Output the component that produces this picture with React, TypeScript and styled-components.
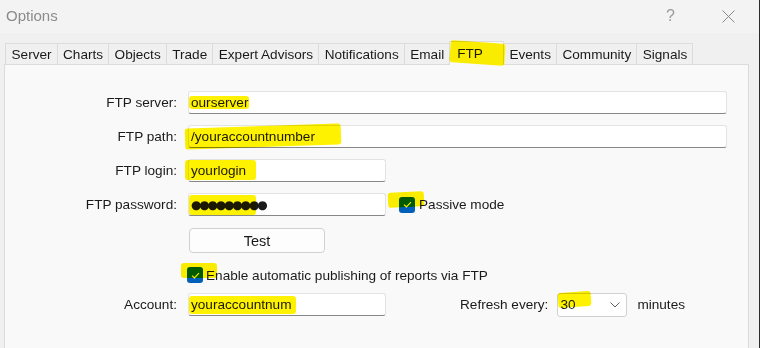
import React from 'react';
import styled, { createGlobalStyle } from 'styled-components';

const GlobalStyle = createGlobalStyle`
  html, body { margin: 0; padding: 0; background: #f0f0f0; }
  body { font-family: "Liberation Sans", Arial, sans-serif; }
`;

const MARKER = '#fff200';

const Window = styled.div`
  width: 760px;
  height: 348px;
  box-sizing: border-box;
  display: flex;
  flex-direction: column;
  overflow: hidden;
  background: #f0f0f0;
  border-right: 1px solid #2b2b2b;
  color: #1a1a1a;
  font-size: 13.6px;
`;

const TitleBar = styled.div`
  height: 33px;
  flex: none;
  display: flex;
  align-items: center;
  padding: 0 24px 0 6px;
  background: #f3f3f3;
`;

const Title = styled.div`
  flex: 1;
  font-size: 15px;
  color: #8b8b8b;
  margin-top: -2px;
`;

const Help = styled.div`
  font-size: 16px;
  color: #9a9a9a;
  margin-right: 47px;
  margin-top: -2px;
`;

const Body = styled.div`
  flex: 1;
  display: flex;
  flex-direction: column;
  padding: 8px 10px 0 4px;
`;

const TabStrip = styled.div`
  height: 24px;
  display: flex;
  align-items: flex-end;
  padding-left: 1px;
  margin-bottom: -1px;
  position: relative;
  z-index: 1;
`;

const Tab = styled.div<{ $active?: boolean }>`
  box-sizing: border-box;
  height: ${(p) => (p.$active ? 24 : 22)}px;
  display: flex;
  align-items: center;
  padding: ${(p) => (p.$active ? '0 20px 1px 7px' : '0 5px 0 5.5px')};
  margin-left: -1px;
  border: 1px solid #dcdcdc;
  border-bottom: ${(p) => (p.$active ? 'none' : '1px solid #dcdcdc')};
  background: ${(p) => (p.$active ? '#f9f9f9' : '#f0f0f0')};
  position: relative;
  z-index: ${(p) => (p.$active ? 2 : 1)};
  white-space: nowrap;
  &:first-child { margin-left: 0; }
`;

const Panel = styled.div`
  flex: 1;
  background: #f9f9f9;
  border: 1px solid #dcdcdc;
  border-bottom: none;
  padding: 26px 21px 0 0;
  display: flex;
  flex-direction: column;
`;

const Row = styled.div<{ $mt?: number; $h?: number }>`
  display: flex;
  align-items: center;
  height: ${(p) => p.$h ?? 23}px;
  margin-top: ${(p) => p.$mt ?? 0}px;
`;

const Label = styled.div`
  width: 172px;
  margin-right: 11px;
  text-align: right;
  white-space: nowrap;
`;

const Field = styled.div<{ $w?: number }>`
  box-sizing: border-box;
  height: 23px;
  ${(p) => (p.$w ? `width: ${p.$w}px;` : 'flex: 1;')}
  display: flex;
  align-items: center;
  padding-left: 2px;
  background: #fff;
  border: 1px solid #e3e3e3;
  border-bottom: 1px solid #878787;
  border-radius: 3px;
  white-space: nowrap;
`;

const Dots = styled.span`
  font-family: "DejaVu Sans", sans-serif;
  font-size: 12px;
  letter-spacing: -2.2px;
`;

const Button = styled.div`
  box-sizing: border-box;
  width: 136px;
  height: 25px;
  margin-left: 184px;
  display: flex;
  align-items: center;
  justify-content: center;
  background: #fdfdfd;
  border: 1px solid #d0d0d0;
  border-radius: 4px;
  font-size: 14.5px;
`;

const CheckLabel = styled.div<{ $ml: number }>`
  display: flex;
  align-items: center;
  margin-left: ${(p) => p.$ml}px;
  white-space: nowrap;
`;

const Box = styled.span`
  width: 16px;
  height: 16px;
  margin-right: 3px;
  border-radius: 3px;
  background: #005fb8;
  display: inline-flex;
  align-items: center;
  justify-content: center;
`;

const Text = styled.span<{ $ml?: number }>`
  margin-left: ${(p) => p.$ml ?? 0}px;
  white-space: nowrap;
`;

const Select = styled.div`
  box-sizing: border-box;
  width: 70px;
  height: 24px;
  margin-left: 9px;
  display: flex;
  align-items: center;
  justify-content: space-between;
  padding: 0 6px 0 2px;
  background: #fff;
  border: 1px solid #d0d0d0;
  border-radius: 3px;
`;

// yellow marker stroke painted over the text
const Mark = styled.span<{ $in: [number, number, number, number]; $rot?: number }>`
  position: relative;
  display: inline-flex;
  align-items: center;
  &::after {
    content: '';
    position: absolute;
    top: ${(p) => p.$in[0]}px;
    right: ${(p) => p.$in[1]}px;
    bottom: ${(p) => p.$in[2]}px;
    left: ${(p) => p.$in[3]}px;
    background: ${MARKER};
    mix-blend-mode: multiply;
    border-radius: 3px;
    transform: rotate(${(p) => p.$rot ?? 0}deg);
    pointer-events: none;
  }
`;

const CheckIcon = () => (
  <svg width="9" height="7" viewBox="0 0 9 7">
    <path d="M1 3.6 L3.4 6 L8 1.2" fill="none" stroke="#fff" strokeWidth="1.1" />
  </svg>
);

const CloseIcon = () => (
  <svg width="13" height="13" viewBox="0 0 13 13">
    <path d="M0.5 0.5 L12.5 12.5 M12.5 0.5 L0.5 12.5" stroke="#8a8a8a" strokeWidth="1" />
  </svg>
);

const Chevron = () => (
  <svg width="10" height="6" viewBox="0 0 10 6">
    <path d="M0.5 0.5 L5 5 L9.5 0.5" fill="none" stroke="#606060" strokeWidth="1" />
  </svg>
);

const tabs = ['Server', 'Charts', 'Objects', 'Trade', 'Expert Advisors', 'Notifications', 'Email', 'FTP', 'Events', 'Community', 'Signals'];

const App = function () {
  return (
    <>
      <GlobalStyle />
      <Window>
        <TitleBar>
          <Title>Options</Title>
          <Help>?</Help>
          <CloseIcon />
        </TitleBar>
        <Body>
          <TabStrip>
            {tabs.map((t) => (
              <Tab key={t} $active={t === 'FTP'}>
                {t === 'FTP' ? <Mark $in={[-4, -22, -3, -7]} $rot={4}>{t}</Mark> : t}
              </Tab>
            ))}
          </TabStrip>
          <Panel>
            <Row>
              <Label>FTP server:</Label>
              <Field><Mark $in={[1, -1, 1, -2]}>ourserver</Mark></Field>
            </Row>
            <Row $mt={11}>
              <Label>FTP path:</Label>
              <Field><Mark $in={[-3, -26, -3, -6]} $rot={-2}>/youraccountnumber</Mark></Field>
            </Row>
            <Row $mt={11}>
              <Label>FTP login:</Label>
              <Field $w={198}><Mark $in={[-3, -10, -2, -6]}>yourlogin</Mark></Field>
            </Row>
            <Row $mt={11}>
              <Label>FTP password:</Label>
              <Field $w={198}><Mark $in={[-3, 9, -3, -2]}><Dots>●●●●●●●●●</Dots></Mark></Field>
              <CheckLabel $ml={13}>
                <Mark $in={[-5, -6, 6, -11]} $rot={-3}>
                  <Box><CheckIcon /></Box>
                </Mark>
                <Text $ml={1}>Passive mode</Text>
              </CheckLabel>
            </Row>
            <Row $mt={12} $h={25}>
              <Button>Test</Button>
            </Row>
            <Row $mt={11} $h={22}>
              <CheckLabel $ml={182}>
                <Mark $in={[-4, -11, 5, -6]}>
                  <Box><CheckIcon /></Box>
                </Mark>
                <Text>Enable automatic publishing of reports via FTP</Text>
              </CheckLabel>
            </Row>
            <Row $mt={7}>
              <Label>Account:</Label>
              <Field $w={198}><Mark $in={[-1, -4, -2, -2]}>youraccountnum</Mark></Field>
              <Text $ml={74}>Refresh every:</Text>
              <Select>
                <Mark $in={[-5, -16, 5, -2]} $rot={-4}>30</Mark>
                <Chevron />
              </Select>
              <Text $ml={10}>minutes</Text>
            </Row>
          </Panel>
        </Body>
      </Window>
    </>
  );
};

export default App;
